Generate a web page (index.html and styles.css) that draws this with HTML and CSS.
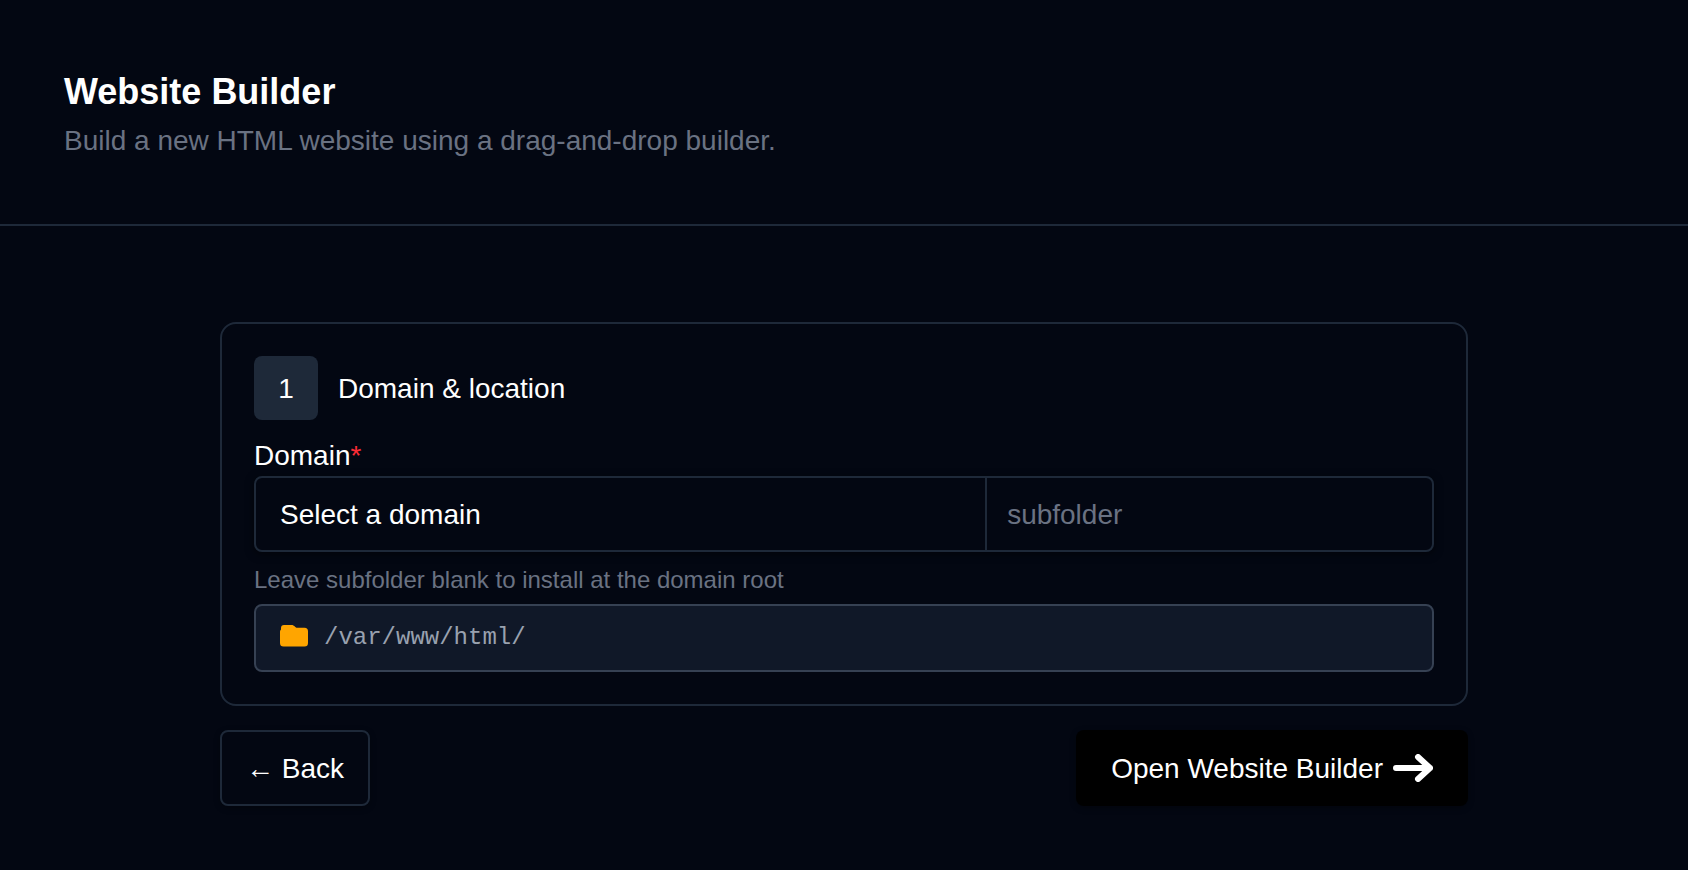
FILE: index.html
```html
<!DOCTYPE html>
<html lang="en">
<head>
<meta charset="utf-8">
<meta name="viewport" content="width=device-width, initial-scale=1">
<title>Website Builder</title>
<link rel="stylesheet" href="styles.css">
</head>
<body>
<header class="page-header">
  <h1 class="page-title">Website Builder</h1>
  <p class="page-subtitle">Build a new HTML website using a drag-and-drop builder.</p>
</header>
<main class="content">
  <form class="wizard">
    <section class="card">
      <div class="step">
        <span class="step-number">1</span>
        <h2 class="step-title">Domain &amp; location</h2>
      </div>
      <label class="label" for="domain">Domain<span class="required">*</span></label>
      <div class="field-group">
        <select class="domain" id="domain" required>
          <option>Select a domain</option>
        </select>
        <input class="subfolder" type="text" placeholder="subfolder" aria-label="Subfolder">
      </div>
      <p class="help">Leave subfolder blank to install at the domain root</p>
      <div class="path">
        <svg class="folder" viewBox="0 0 28 28" aria-hidden="true"><path d="M4 1h7.500c1.200 0 2 .4 2.800 1.100l1 .8c.7.600 1.500.9 2.500.9H24.500a3.500 3.500 0 0 1 3.500 3.500V19a3.500 3.500 0 0 1-3.500 3.500h-21A3.500 3.500 0 0 1 0 19V7.500c0-.8.3-1.500 1-2V4a3 3 0 0 1 3-3z"/></svg>
        <code class="path-text">/var/www/html/</code>
      </div>
    </section>
    <div class="actions">
      <button class="button button-outline" type="button">← Back</button>
      <button class="button button-primary" type="submit">Open Website Builder
        <svg class="arrow" viewBox="0 0 40 28" aria-hidden="true"><path d="M3 14h34M25 3l12 11-12 11"/></svg>
      </button>
    </div>
  </form>
</main>
</body>
</html>
```
FILE: styles.css
```css
* {
  box-sizing: border-box;
  margin: 0;
}

body {
  min-height: 100vh;
  background: #030712;
  color: #fff;
  font: 28px/41px "Liberation Sans", Arial, sans-serif;
}

.page-header {
  padding: 64px 64px 63px;
  border-bottom: 2px solid #1e2939;
}

.page-title {
  font-size: 36px;
  line-height: 56px;
}

.page-subtitle {
  color: #6a7282;
}

.content {
  padding: 96px 64px 64px;
}

.wizard {
  display: flex;
  flex-direction: column;
  gap: 24px;
  max-width: 1248px;
  margin: 0 auto;
}

.card {
  display: flex;
  flex-direction: column;
  padding: 32px;
  border: 2px solid #1e2939;
  border-radius: 16px;
}

.step {
  display: flex;
  align-items: center;
  gap: 20px;
  margin-bottom: 15px;
}

.step-number {
  display: grid;
  place-items: center;
  width: 64px;
  height: 64px;
  border-radius: 8px;
  background: #1e2939;
}

.step-title {
  font-size: 28px;
  font-weight: 400;
}

.required {
  color: #fb2c36;
}

.field-group {
  display: flex;
  height: 76px;
  border: 2px solid #1e2939;
  border-radius: 8px;
  box-shadow: 0 2px 8px rgba(0, 0, 0, 0.5);
}

.domain,
.subfolder {
  min-width: 0;
  border: 0;
  outline: 0;
  appearance: none;
  background: transparent;
  color: #fff;
  font: inherit;
}

.domain {
  flex: 1;
  padding: 0 24px;
}

.domain option {
  background: #030712;
}

.subfolder {
  width: 38%;
  padding: 0 20px;
  border-left: 2px solid #1e2939;
}

.subfolder::placeholder {
  color: #6a7282;
  opacity: 1;
}

.help {
  margin: 12px 0 8px;
  color: #6a7282;
  font-size: 24px;
  line-height: 32px;
}

.path {
  display: flex;
  align-items: center;
  gap: 16px;
  padding: 16px 24px;
  border: 2px solid #364153;
  border-radius: 8px;
  background: #101828;
}

.folder {
  width: 28px;
  height: 28px;
  fill: #ffa500;
}

.path-text {
  color: #99a1af;
  font: 24px/32px "Liberation Mono", monospace;
}

.actions {
  display: flex;
  justify-content: space-between;
}

.button {
  display: flex;
  align-items: center;
  gap: 10px;
  height: 76px;
  border: 0;
  border-radius: 8px;
  color: #fff;
  font: inherit;
  box-shadow: 0 2px 6px rgba(0, 0, 0, 0.3);
}

.button-outline {
  padding: 0 24px;
  border: 2px solid #1e2939;
  background: #030712;
}

.button-primary {
  padding: 0 35px;
  background: #000;
}

.arrow {
  width: 40px;
  height: 28px;
  fill: none;
  stroke: #fff;
  stroke-width: 6;
  stroke-linecap: round;
  stroke-linejoin: round;
}
```
